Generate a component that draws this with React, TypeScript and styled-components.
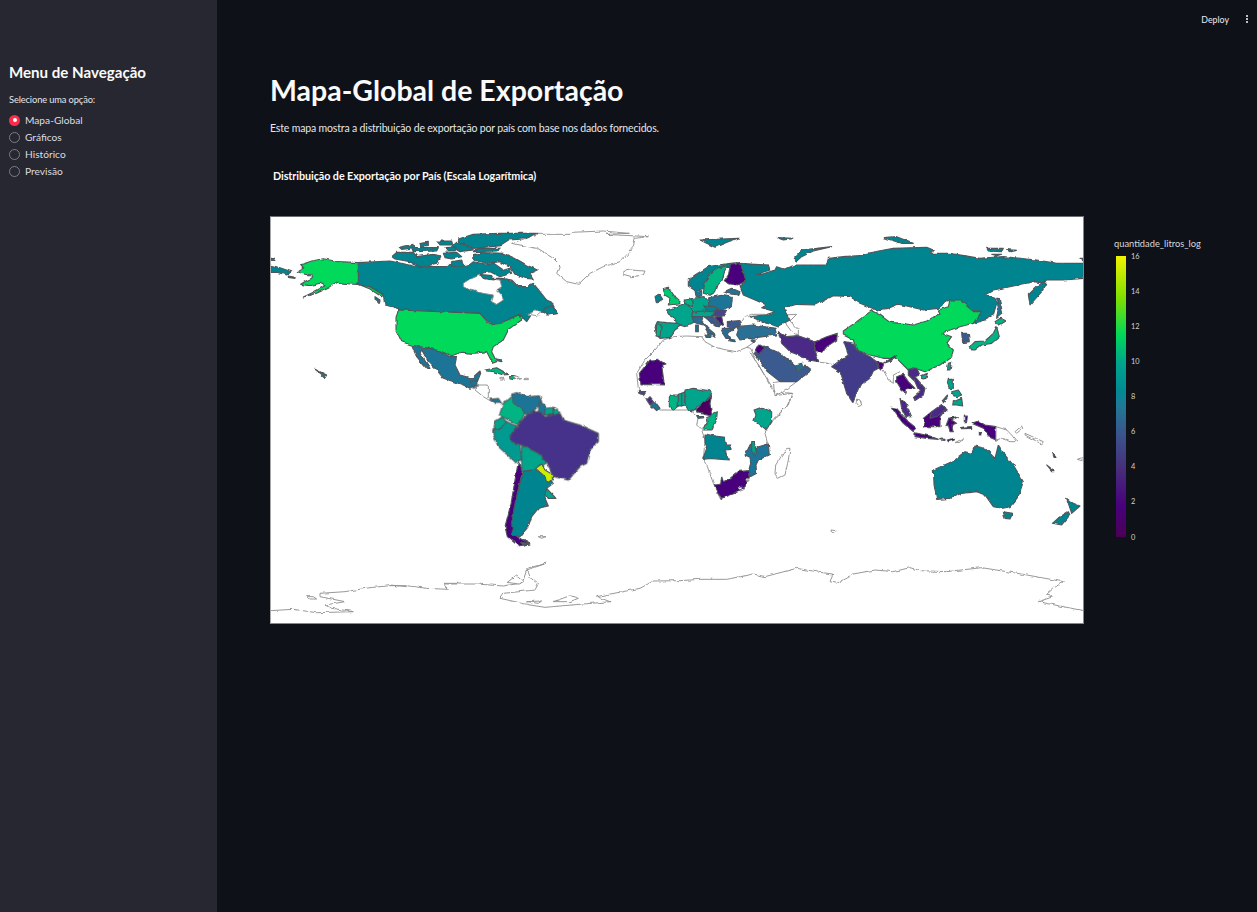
import React from "react";
import styled, { createGlobalStyle } from "styled-components";

const Global = createGlobalStyle`
  html, body { margin: 0; padding: 0; background: #0e1117; }
  body { font-family: "Lato", "Noto Sans", sans-serif; color: #fafafa; }
`;

const Shell = styled.div`
  display: flex;
  height: 912px;
  overflow: hidden;
`;
const Sidebar = styled.aside`
  width: 217px;
  flex: none;
  box-sizing: border-box;
  background: #262730;
  padding: 63px 9px 0;
`;
const SideTitle = styled.h3`
  margin: 0 0 13px;
  font-size: 15.1px;
  line-height: 18px;
  font-weight: 700;
  color: #fafafa;
`;
const RadioLabel = styled.div`
  font-size: 9.3px;
  line-height: 12px;
  letter-spacing: -0.12px;
  margin-bottom: 7px;
  color: #e6e6ea;
`;
const RadioGroup = styled.div`
  display: flex;
  flex-direction: column;
  gap: 3px;
`;
const RadioRow = styled.div`
  display: flex;
  align-items: center;
  gap: 5px;
  height: 14px;
  font-size: 10.2px;
  color: #dcdce2;
`;
const Dot = styled.span<{ $on?: boolean }>`
  width: 11px;
  height: 11px;
  flex: none;
  box-sizing: border-box;
  border-radius: 50%;
  display: flex;
  align-items: center;
  justify-content: center;
  background: ${(p) => (p.$on ? "#ff2b4b" : "transparent")};
  border: ${(p) => (p.$on ? "none" : "1px solid #7b7c85")};
  &::after {
    content: "";
    width: 4px;
    height: 4px;
    border-radius: 50%;
    background: ${(p) => (p.$on ? "#fff" : "transparent")};
  }
`;
const Main = styled.main`
  flex: 1;
  min-width: 0;
  display: flex;
  flex-direction: column;
  background: #0e1117;
`;
const TopBar = styled.header`
  height: 38px;
  display: flex;
  align-items: center;
  justify-content: flex-end;
  gap: 17px;
  padding: 0 9px 0 0;
  font-size: 8.8px;
  color: #eaeaf0;
`;
const Kebab = styled.span`
  display: flex;
  flex-direction: column;
  gap: 1.4px;
  & > i {
    width: 2px;
    height: 2px;
    border-radius: 50%;
    background: #fafafa;
  }
`;
const Content = styled.div`
  padding: 36px 0 0 53px;
`;
const Title = styled.h1`
  margin: 0 0 14px;
  font-size: 28.5px;
  line-height: 33px;
  font-weight: 700;
  color: #fafafa;
`;
const Lead = styled.p`
  margin: 0 0 34px;
  font-size: 10.5px;
  line-height: 14px;
  letter-spacing: -0.16px;
  color: #e6e6ea;
`;
const ChartTitle = styled.div`
  margin: 0 0 33px 3px;
  font-size: 10.8px;
  line-height: 14px;
  letter-spacing: -0.08px;
  font-weight: 700;
  color: #fafafa;
`;
const ChartRow = styled.div`
  display: flex;
  align-items: flex-start;
`;
const MapFrame = styled.div`
  width: 814px;
  height: 408px;
  flex: none;
  box-sizing: border-box;
  background: #fff;
  border: 1px solid #a8a8a8;
  border-top-color: #6a6d72;
  border-bottom-color: #85878b;
  border-right-color: #85878b;
  overflow: hidden;
  & > svg { display: block; }
`;
const Legend = styled.div`
  margin: 22px 0 0 30px;
  display: flex;
  flex-direction: column;
  gap: 6px;
`;
const LegendTitle = styled.div`
  font-size: 9.3px;
  line-height: 12px;
  color: #d8d9de;
`;
const LegendBody = styled.div`
  display: flex;
  gap: 5px;
  margin-left: 2px;
  height: 281px;
`;
const LegendBar = styled.div`
  width: 10px;
  height: 100%;
  background: linear-gradient(to top, #4b0055 0%, #48007c 11%, #472d7b 24%, #3b528b 36%, #1f7a96 47%, #008a94 52%, #00a58c 62%, #00d85a 72%, #7fe000 85%, #f2f200 100%);
`;
const LegendTicks = styled.div`
  display: flex;
  flex-direction: column-reverse;
  justify-content: space-between;
  height: calc(100% + 7px);
  margin-top: -3.5px;
  font-size: 7.4px;
  line-height: 7px;
  color: #cfd0d6;
`;
const Shape = styled.path<{ $fill: string }>`
  fill: ${(p) => p.$fill};
  stroke: ${(p) => (p.$fill === "none" || p.$fill === "#fff" ? "#8c8c8c" : "#50555a")};
  stroke-width: ${(p) => (p.$fill === "none" || p.$fill === "#fff" ? 0.9 : 1.1)}px;
  stroke-linejoin: round;
  vector-effect: non-scaling-stroke;
`;

const TEAL = "#00848f";
const GREEN = "#00d95a";
const SEA = "#00a58c";
const MINT = "#00b583";
const DPURPLE = "#48007c";
const INDIGO = "#47338b";
const VIOLET = "#4c2a87";
const SLATE = "#3a5a90";
const STEEL = "#1e7596";
const W = "#fff";
const N = "none";

type Region = { ox: number; oy: number; shapes: [string, string][] };

const regions: Region[] = [
  { ox: 270, oy: 215, shapes: [
    [W, "M725,85 800,58 900,58 905,52 1000,48 1075,55 1005,58 1080,62 1135,65 1095,70 1090,95 1075,115 1050,140 1000,155 960,175 925,208 890,200 860,175 870,150 850,130 800,100Z"],
    [W, "M1058,170 1080,165 1125,168 1120,180 1085,185 1060,178Z"],
    [W, "M620,510 655,510 655,545 665,560 640,545 615,525Z"],
    [TEAL, "M265,143 360,138 420,150 440,155 530,155 540,145 570,155 600,148 610,140 650,148 672,145 700,165 720,160 725,175 690,185 660,170 635,175 650,190 695,190 725,195 745,215 770,215 790,205 830,255 845,262 862,295 830,300 815,290 800,285 780,305 770,320 750,300 725,310 690,325 665,332 655,320 630,295 385,285 370,275 345,270 340,240 300,215 265,208Z"],
    [W, "M580,205 595,195 630,180 640,190 690,195 695,215 680,225 695,240 700,255 680,268 665,260 670,240 640,235 600,225 580,215Z"],
    [W, "M770,300 800,285 815,290 800,305Z"],
    [TEAL, "M565,72 610,58 690,55 800,55 770,68 720,72 690,92 610,100 590,90 565,85Z"],
    [TEAL, "M620,100 690,100 680,108 610,110Z"],
    [TEAL, "M560,82 600,95 610,105 570,110 545,95Z"],
    [TEAL, "M610,118 650,113 700,115 735,130 770,150 802,165 780,175 790,192 765,190 735,178 720,155 690,140 650,145 612,135Z"],
    [TEAL, "M365,125 380,112 430,112 440,125 490,118 510,122 500,145 450,158 420,140 375,132Z"],
    [TEAL, "M388,97 430,88 437,93 420,100 395,103Z"],
    [TEAL, "M450,85 475,82 475,92 452,93Z"],
    [TEAL, "M425,98 505,98 500,108 430,110Z"],
    [TEAL, "M500,78 545,78 548,90 510,90Z"],
    [TEAL, "M525,98 560,96 555,108 530,108Z"],
    [TEAL, "M520,115 560,112 575,125 545,132 525,128Z"],
    [TEAL, "M545,140 575,135 580,152 545,155Z"],
    [TEAL, "M630,178 665,182 672,195 640,190Z"],
    [TEAL, "M315,245 330,255 328,262 315,252Z"],
    [TEAL, "M818,285 845,272 865,295 835,300Z"],
    [TEAL, "M0,150 30,158 65,170 50,180 20,172 0,172Z"],
    [TEAL, "M0,130 15,130 15,136 0,136Z"],
    [TEAL, "M55,183 75,187 75,190 55,187Z"],
    [GREEN, "M265,143 205,140 160,131 125,138 90,150 100,160 82,170 105,178 130,180 125,190 108,198 92,208 120,212 150,205 165,212 130,232 100,246 140,235 175,218 190,208 200,202 240,207 265,208Z"],
    [GREEN, "M265,208 300,215 340,240 335,245 300,222Z"],
    [GREEN, "M385,285 630,295 660,330 690,325 725,310 750,298 755,315 730,335 715,345 700,375 670,395 665,410 680,440 668,445 650,410 610,415 575,412 545,422 510,408 475,400 430,392 395,380 378,345 378,310Z"],
    [STEEL, "M425,392 475,400 510,408 540,425 560,425 555,450 570,480 605,490 630,468 632,475 620,505 600,520 580,510 520,490 500,465 475,440 455,405 450,415 480,460 470,460 440,425Z"],
    [MINT, "M645,465 680,458 715,478 700,480 670,470 650,468Z"],
    [MINT, "M718,482 735,482 733,494 720,492Z"],
    [W, "M733,482 755,488 735,494Z"],
    [W, "M762,490 775,490 775,494 762,494Z"],
    [W, "M690,490 702,490 702,495 690,495Z"],
    [STEEL, "M680,432 698,435 695,440 682,437Z"],
    [TEAL, "M135,463 170,480 165,488 155,478Z"],
    [N, "M1105,470 1115,455 1160,420 1190,370"],
  ]},
  { ox: 630, oy: 350, shapes: [
    [W, "M75,0 100,-30 130,-40 170,-42 215,-40 225,-25 255,-8 290,0 320,5 350,-8 362,-5 375,25 400,70 430,125 488,130 470,170 430,210 405,250 415,285 365,340 360,370 340,420 270,445 250,400 232,350 220,330 225,270 215,240 200,225 205,200 180,180 90,180 50,150 25,115 20,70 45,30Z"],
    [N, "M350,-8 370,-22 384,-36"],
    [DPURPLE, "M28,70 60,30 85,28 105,42 95,45 103,105 60,103 33,105Z"],
    ["#47458a", "M25,125 48,125 42,135 28,132Z"],
    [VIOLET, "M50,150 60,140 72,155 60,165Z"],
    [STEEL, "M62,165 75,155 90,175 80,182Z"],
    [MINT, "M118,135 145,135 148,165 130,180 118,170Z"],
    [SEA, "M145,133 155,130 155,168 145,168Z"],
    [SEA, "M155,130 165,125 165,165 155,168Z"],
    [SEA, "M165,120 190,115 235,122 245,130 225,160 200,170 195,183 175,180 165,165Z"],
    ["#4b0060", "M245,135 240,160 245,195 200,185 198,178 225,155Z"],
    [STEEL, "M200,197 218,197 218,203 205,205Z"],
    [MINT, "M230,200 262,185 260,205 245,240 218,240 225,225 235,220Z"],
    [TEAL, "M225,252 255,258 285,262 290,285 303,285 303,298 285,300 295,330 240,325 218,328 230,295 225,275Z"],
    [SEA, "M372,180 395,172 425,185 425,215 408,242 372,212 378,195Z"],
    [STEEL, "M360,285 372,275 375,300 385,290 415,282 418,315 385,330 378,345 380,370 358,382 355,365 362,340 360,322 345,315Z"],
    [SEA, "M365,275 372,275 378,300 375,320 365,300Z"],
    [W, "M470,295 480,295 475,330 465,375 445,385 435,372 437,345Z"],
    [DPURPLE, "M275,380 280,395 300,385 325,365 355,362 358,385 345,410 315,430 275,445 260,425 252,405 272,402Z"],
    [W, "M325,412 335,408 335,416 327,418Z"],
    [W, "M351,386 357,386 357,392 351,392Z"],
  ]},
  { ox: 640, oy: 260, shapes: [
    [TEAL, "M145,60 165,45 205,20 255,12 290,8 312,14 300,22 265,22 230,32 205,60 195,85 165,92 145,78Z"],
    [MINT, "M190,100 193,75 205,50 230,25 264,15 252,40 247,60 234,75 227,95 210,106Z"],
    [DPURPLE, "M272,12 300,8 310,35 318,62 295,75 270,72 253,62 265,45Z"],
    ["#00c870", "M70,85 85,82 108,115 120,125 118,132 85,135 90,115 75,105Z"],
    [TEAL, "M45,110 60,105 68,118 50,128Z"],
    [STEEL, "M165,95 185,92 185,108 170,110Z"],
    [MINT, "M135,120 157,116 157,140 138,134Z"],
    [SEA, "M80,150 110,140 135,130 160,148 158,175 165,185 135,200 110,192 105,175 85,162Z"],
    [SEA, "M155,116 192,110 208,125 208,150 190,157 158,152Z"],
    [STEEL, "M206,113 245,106 277,112 274,140 245,150 206,137Z"],
    [TEAL, "M190,138 225,140 237,150 205,157Z"],
    [SEA, "M158,156 190,153 227,156 217,170 180,172 155,170Z"],
    ["#47458a", "M225,150 260,150 250,168 220,168Z"],
    ["#2c6a96", "M158,170 190,170 185,182 205,205 228,225 225,232 205,220 190,195 170,190 160,185Z"],
    [STEEL, "M195,222 215,225 212,232 198,232Z"],
    [STEEL, "M167,195 175,195 175,215 167,215Z"],
    [SLATE, "M195,172 220,170 245,195 235,200 210,185Z"],
    ["#44197f", "M225,170 245,170 250,195 240,195Z"],
    [SLATE, "M262,185 300,182 305,195 280,205 262,200Z"],
    ["#2c6a96", "M248,205 280,205 265,222 272,235 258,235 245,215Z"],
    ["#2a6f95", "M290,200 340,195 405,205 410,225 370,230 330,235 300,240 290,225 295,210Z"],
    [SEA, "M52,185 80,188 110,190 125,195 105,210 90,232 60,235 50,225 45,200Z"],
    [MINT, "M50,195 64,195 60,230 48,228Z"],
    ["#2a6f95", "M252,95 275,85 300,95 295,105 262,100Z"],
    [STEEL, "M268,238 288,240 285,245 270,243Z"],
    [STEEL, "M330,240 345,238 340,247Z"],
  ]},
  { ox: 680, oy: 215, shapes: [
    [N, "M310,300 350,298 330,318 355,345 355,360 335,350 320,330 310,300"],
    [N, "M415,440 455,448"],
    [N, "M610,465 625,495 640,505 640,480 660,470"],
    [N, "M185,320 195,305 215,298 255,298"],
    [W, "M280,503 345,492 350,500 310,530 285,542Z"],
    [N, "M285,542 335,535 325,570 280,612"],
    [N, "M210,410 285,530"],
    [TEAL, "M180,215 198,197 190,170 180,145 225,148 265,150 270,165 230,178 245,178 285,165 290,155 310,162 350,150 440,150 445,130 490,125 540,122 560,115 640,100 740,97 760,105 750,115 810,115 870,125 900,130 970,125 1070,135 1130,145 1210,145 1210,190 1150,195 1100,195 1070,215 1045,240 1050,270 1090,225 1100,205 1060,200 1040,205 990,215 940,225 915,240 945,250 950,265 940,300 900,320 880,325 905,290 875,285 835,255 800,258 775,280 730,285 690,275 655,268 625,280 590,285 540,265 510,245 460,242 405,270 350,268 310,280 330,315 290,335 250,320 210,305 255,300 285,290 245,278 260,270 225,255 190,240Z"],
    [TEAL, "M60,75 175,70 145,80 105,97 80,85Z"],
    [TEAL, "M292,68 340,70 310,75Z"],
    [TEAL, "M340,130 365,105 455,95 400,108 365,125 350,138Z"],
    [TEAL, "M610,68 650,65 700,85 665,85Z"],
    [TEAL, "M920,100 970,100 965,110 925,108Z"],
    [TEAL, "M980,104 1010,106 990,110Z"],
    [TEAL, "M935,118 965,118 950,122Z"],
    [STEEL, "M950,250 958,250 968,295 950,310 955,280Z"],
    [TEAL, "M1200,130 1210,130 1210,138Z"],
    [GREEN, "M490,348 530,320 550,305 575,287 600,300 630,322 670,325 700,330 740,318 780,295 775,285 805,275 810,255 840,255 880,290 905,290 880,325 840,335 810,345 785,355 815,365 800,385 820,405 815,425 780,450 735,470 700,458 685,465 650,430 610,430 570,420 530,405 520,375 490,360Z"],
    [MINT, "M725,482 742,475 738,490 725,492Z"],
    [SEA, "M805,445 815,442 810,465 802,465Z"],
    [SLATE, "M845,355 865,355 868,380 848,383Z"],
    [MINT, "M870,395 885,380 915,378 940,355 950,335 958,365 935,385 905,390 885,405 875,405Z"],
    [MINT, "M945,320 960,310 975,318 955,330Z"],
    [VIOLET, "M295,350 320,365 355,362 405,380 405,410 418,440 385,435 355,420 330,410 305,385Z"],
    [DPURPLE, "M405,380 440,365 472,355 470,375 440,395 425,415 405,410Z"],
    ["#433a8a", "M490,378 520,385 530,405 570,425 590,440 595,460 580,468 570,490 540,510 525,545 518,562 500,535 480,470 455,455 475,440 505,420Z"],
    [DPURPLE, "M590,440 612,445 605,465 595,460Z"],
    ["#433a8a", "M612,445 650,418 650,428 625,440Z"],
    [W, "M530,552 540,555 545,570 535,575 528,565Z"],
    [SLATE, "M222,415 252,393 300,415 340,445 360,470 375,450 395,465 350,500 300,500 262,470 238,435Z"],
    [DPURPLE, "M225,405 240,390 255,398 235,418Z"],
    [STEEL, "M345,450 365,445 370,460 355,470Z"],
  ]},
  { ox: 870, oy: 360, shapes: [
    [DPURPLE, "M80,50 100,43 115,65 135,85 110,90 108,100 95,90 80,65Z"],
    [VIOLET, "M115,28 140,25 150,45 135,50 165,85 160,105 135,122 130,110 148,95 135,65 115,45Z"],
    [VIOLET, "M90,115 108,130 125,170 108,172 95,145Z"],
    [DPURPLE, "M65,142 80,145 115,185 140,205 130,215 100,190 80,165Z"],
    [DPURPLE, "M135,218 180,228 205,238 170,235 135,230Z"],
    [DPURPLE, "M160,175 185,155 205,150 215,135 228,148 210,170 210,200 165,200Z"],
    [VIOLET, "M185,155 215,133 228,150 200,170 180,175Z"],
    [DPURPLE, "M235,175 265,170 245,180 260,190 245,195 250,215 240,215 235,195 228,200Z"],
    [DPURPLE, "M305,190 325,183 345,195 378,200 378,240 355,230 340,205Z"],
    [W, "M378,200 410,210 425,225 440,245 420,245 395,235 378,240Z"],
    [DPURPLE, "M275,202 305,200 305,205 275,206Z"],
    [DPURPLE, "M283,168 292,168 290,185 283,185Z"],
    [DPURPLE, "M328,218 335,218 333,225 328,225Z"],
    [DPURPLE, "M210,237 225,238 225,241 210,240Z"],
    [DPURPLE, "M232,240 250,235 250,240 235,245Z"],
    [W, "M255,248 280,235 270,247Z"],
    [SEA, "M235,55 250,55 250,85 238,85 232,70Z"],
    [SEA, "M245,95 265,90 275,105 262,110 248,105Z"],
    [SEA, "M250,125 275,115 278,138 260,135 248,135Z"],
    [TEAL, "M215,125 232,105 234,108 220,125Z"],
    [W, "M435,215 455,198 458,205 440,220Z"],
    [W, "M465,220 520,245 515,252 465,225Z"],
  ]},
  { ox: 470, oy: 370, shapes: [
    [STEEL, "M0,35 20,30 20,45 10,55Z"],
    [STEEL, "M60,88 85,85 95,100 75,100Z"],
    [MINT, "M128,75 130,90 165,130 145,165 125,155 95,140 90,130 100,100Z"],
    [STEEL, "M125,72 140,68 170,80 208,78 215,95 190,125 170,135 130,95Z"],
    [STEEL, "M208,95 225,105 225,135 205,125Z"],
    [SEA, "M225,115 250,112 250,135 225,135Z"],
    [SEA, "M250,112 270,125 260,135 250,135Z"],
    [SEA, "M75,155 95,142 110,155 85,180 72,175Z"],
    ["#009a90", "M68,180 85,180 110,155 140,168 120,205 150,225 155,270 135,275 85,230 70,195Z"],
    [INDIGO, "M145,165 165,140 190,125 210,125 225,140 250,135 270,130 280,150 330,165 385,190 385,215 360,240 350,280 330,290 295,330 250,320 230,275 205,250 155,225 125,215 120,200Z"],
    [SEA, "M155,225 205,250 230,275 225,285 195,300 155,305Z"],
  ]},
  { ox: 270, oy: 420, shapes: [
    [DPURPLE, "M745,125 758,150 748,195 738,250 728,310 732,345 780,372 745,378 712,350 705,320 718,270 725,240 735,180Z"],
    [TEAL, "M760,155 795,150 830,165 850,190 830,205 825,235 835,258 805,265 785,290 775,320 750,350 728,345 725,310 735,250 748,195Z"],
    [STEEL, "M750,365 778,372 760,375Z"],
    [SEA, "M830,205 858,235 835,235 825,225Z"],
    ["#ccee00", "M797,145 815,132 825,150 850,165 850,180 830,187 825,170Z"],
    [W, "M805,350 828,350 815,355Z"],
    [N, "M0,572 70,568 140,578 250,575 185,565 165,555 225,545 150,530 150,520 225,515 300,503 360,497 410,497 470,505 535,508 520,492 620,492 700,498 750,490 760,480 770,450 830,430 770,445 780,470 805,490 795,510 700,520 690,535 780,555 825,562 1020,545 980,530 1110,505 1150,483 1230,482"],
    [W, "M110,530 130,530 140,537 120,537Z"],
    [W, "M712,487 740,465 760,482 745,492Z"],
    [W, "M850,545 900,527 925,535 900,545Z"],
    [W, "M770,545 815,543 805,550Z"],
    [N, "M360,495 410,500 M520,490 565,490"],
  ]},
  { ox: 680, oy: 420, shapes: [
    [TEAL, "M760,150 815,125 855,95 875,100 885,78 915,85 945,115 955,75 975,105 1000,135 1030,185 1015,230 990,260 965,265 940,260 915,225 890,215 845,220 810,235 770,238 762,190Z"],
    [TEAL, "M970,275 998,280 990,297 975,295Z"],
    [TEAL, "M1160,235 1180,250 1200,258 1175,280 1170,265Z"],
    [TEAL, "M1117,310 1140,290 1165,275 1170,285 1145,315Z"],
    [DPURPLE, "M1118,100 1128,112 1122,112Z"],
    [TEAL, "M1100,135 1122,152 1115,152Z"],
    [W, "M1192,118 1208,112 1205,122Z"],
    [W, "M453,330 468,332 465,338 455,338Z"],
    [N, "M0,482 60,478 140,478 220,462 255,470 350,445 380,450 420,457 458,462 450,485 470,490 520,462 585,450 640,455 690,443 720,452 800,455 905,443 980,455 1030,463 1150,485 1120,505 1098,525 1120,530 1075,545 1210,572"],
  ]},
];

const WorldMap = () => (
  <svg width="812" height="406" viewBox="271 217 812 406" aria-hidden="true">
    <defs>
      <filter id="coast" filterUnits="userSpaceOnUse" x="271" y="217" width="812" height="406">
        <feTurbulence type="fractalNoise" baseFrequency="0.16" numOctaves="2" seed="4" result="noise" />
        <feDisplacementMap in="SourceGraphic" in2="noise" scale="3.2" xChannelSelector="R" yChannelSelector="G" />
      </filter>
    </defs>
    <g filter="url(#coast)">
      {regions.map((r) => (
        <g key={`${r.ox}-${r.oy}`} transform={`translate(${r.ox} ${r.oy}) scale(${1 / 3})`}>
          {r.shapes.map(([c, d], i) => (
            <Shape key={i} $fill={c} d={d} />
          ))}
        </g>
      ))}
    </g>
  </svg>
);

const options = ["Mapa-Global", "Gráficos", "Histórico", "Previsão"];
const ticks = ["0", "2", "4", "6", "8", "10", "12", "14", "16"];

export default function App() {
  return (
    <>
      <Global />
      <Shell>
        <Sidebar>
          <SideTitle>Menu de Navegação</SideTitle>
          <RadioLabel>Selecione uma opção:</RadioLabel>
          <RadioGroup>
            {options.map((o, i) => (
              <RadioRow key={o}>
                <Dot $on={i === 0} />
                {o}
              </RadioRow>
            ))}
          </RadioGroup>
        </Sidebar>
        <Main>
          <TopBar>
            <span>Deploy</span>
            <Kebab><i /><i /><i /></Kebab>
          </TopBar>
          <Content>
            <Title>Mapa-Global de Exportação</Title>
            <Lead>Este mapa mostra a distribuição de exportação por país com base nos dados fornecidos.</Lead>
            <ChartTitle>Distribuição de Exportação por País (Escala Logarítmica)</ChartTitle>
            <ChartRow>
              <MapFrame><WorldMap /></MapFrame>
              <Legend>
                <LegendTitle>quantidade_litros_log</LegendTitle>
                <LegendBody>
                  <LegendBar />
                  <LegendTicks>
                    {ticks.map((t) => <span key={t}>{t}</span>)}
                  </LegendTicks>
                </LegendBody>
              </Legend>
            </ChartRow>
          </Content>
        </Main>
      </Shell>
    </>
  );
}
